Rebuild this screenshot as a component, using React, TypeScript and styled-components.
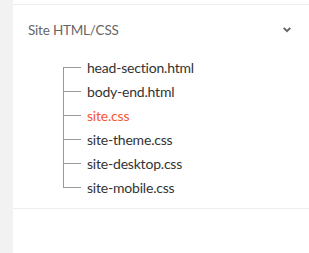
import styled, { createGlobalStyle } from "styled-components";

const GlobalStyle = createGlobalStyle`
  html, body {
    margin: 0;
    padding: 0;
    background: #ffffff;
  }
  body {
    font-family: "Lato", "Liberation Sans", sans-serif;
  }
`;

const files = [
  { name: "head-section.html" },
  { name: "body-end.html" },
  { name: "site.css", active: true },
  { name: "site-theme.css" },
  { name: "site-desktop.css" },
  { name: "site-mobile.css" },
];

export default function App() {
  return (
    <>
      <GlobalStyle />
      <Page>
        <Strip />
        <Panel>
          <Section>
            <Header>
              <Title>Site HTML/CSS</Title>
              <Chevron viewBox="0 0 8 6" aria-hidden>
                <path d="M0 1.6 L1.4 0.3 L4 2.8 L6.6 0.3 L8 1.6 L4 5.4 Z" fill="#666" />
              </Chevron>
            </Header>
            <Tree>
              {files.map((f) => (
                <Item key={f.name} $active={f.active}>
                  {f.name}
                </Item>
              ))}
            </Tree>
          </Section>
        </Panel>
      </Page>
    </>
  );
}

const Page = styled.div`
  display: flex;
  min-height: 253px;
`;

const Strip = styled.div`
  width: 13px;
  flex-shrink: 0;
  background: #f2f2f2;
`;

const Panel = styled.div`
  flex: 1;
  padding-top: 4px;
  background: #fff;
`;

const Section = styled.section`
  border-top: 1px solid #eeeeee;
  border-bottom: 1px solid #eeeeee;
  padding-bottom: 9px;
`;

const Header = styled.div`
  height: 50px;
  display: flex;
  align-items: center;
  justify-content: space-between;
  padding: 0 18px 0 15px;
`;

const Title = styled.span`
  font-size: 13.5px;
  letter-spacing: -0.2px;
  color: #666;
`;

const Chevron = styled.svg`
  width: 8px;
  height: 6px;
`;

const Tree = styled.ul`
  list-style: none;
  margin: 0 0 0 50px;
  padding: 0 0 0 24px;
  position: relative;

  &::before {
    content: "";
    position: absolute;
    left: 0;
    top: 12px;
    bottom: 12px;
    border-left: 1px solid #999;
  }
`;

const Item = styled.li<{ $active?: boolean }>`
  position: relative;
  height: 24px;
  line-height: 25px;
  font-size: 14px;
  letter-spacing: -0.2px;
  color: ${(p) => (p.$active ? "#f4562f" : "#333")};

  &::before {
    content: "";
    position: absolute;
    left: -24px;
    top: 12px;
    width: 18px;
    border-top: 1px solid #999;
  }
`;
